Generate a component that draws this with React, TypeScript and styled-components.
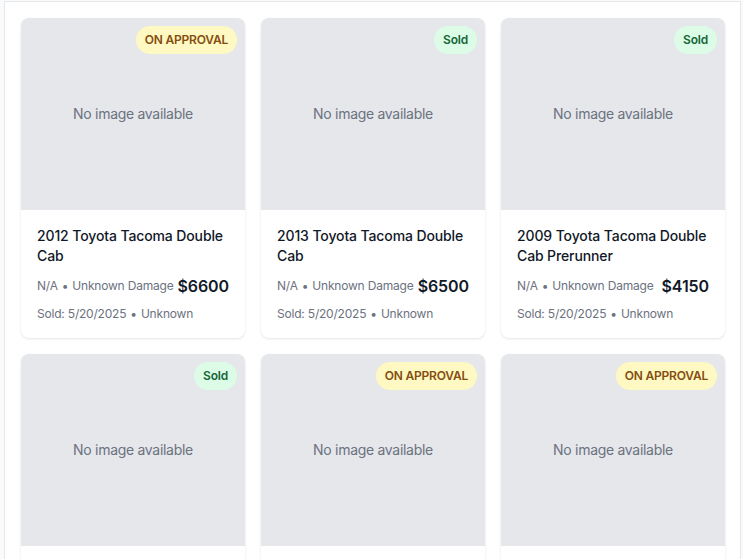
import React from "react";
import styled, { createGlobalStyle } from "styled-components";

const GlobalStyle = createGlobalStyle`
  html, body { margin: 0; padding: 0; background: #f9fafb; }
  body { font-family: Inter, "Noto Sans", "Liberation Sans", sans-serif; -webkit-font-smoothing: antialiased; }
  * { box-sizing: border-box; }
`;

const Page = styled.div`
  padding: 1px 2px 0 4px;
`;

const Panel = styled.div`
  background: #ffffff;
  border: 1px solid #e5e7eb;
  padding: 16px 14px 16px 16px;
`;

const Grid = styled.div`
  display: grid;
  grid-template-columns: repeat(3, 224px);
  gap: 16px;
`;

const Card = styled.div`
  background: #ffffff;
  border-radius: 8px;
  overflow: hidden;
  box-shadow: 0 1px 3px rgba(0, 0, 0, 0.08), 0 1px 2px rgba(0, 0, 0, 0.04);
  display: flex;
  flex-direction: column;
`;

const ImageArea = styled.div`
  position: relative;
  height: 192px;
  background: #e5e7eb;
  display: flex;
  align-items: center;
  justify-content: center;
  color: #6b7280;
  font-size: 14px;
  line-height: 20px;
  letter-spacing: -0.3px;
`;

const Badge = styled.span<{ $tone: "approval" | "sold" }>`
  position: absolute;
  top: 8px;
  right: 8px;
  padding: 6px 9px;
  border-radius: 9999px;
  font-size: 12px;
  line-height: 16px;
  font-weight: 600;
  letter-spacing: -0.2px;
  background: ${(p) => (p.$tone === "approval" ? "#fef9c3" : "#dcfce7")};
  color: ${(p) => (p.$tone === "approval" ? "#854d0e" : "#166534")};
`;

const Body = styled.div`
  padding: 16px;
  display: flex;
  flex-direction: column;
`;

const Title = styled.h3`
  margin: 0;
  font-size: 14px;
  line-height: 20px;
  font-weight: 500;
  letter-spacing: -0.12px;
  color: #111827;
`;

const MetaRow = styled.div`
  margin-top: 8px;
  display: flex;
  align-items: center;
  justify-content: space-between;
  gap: 4px;
`;

const Meta = styled.span`
  font-size: 12px;
  line-height: 16px;
  letter-spacing: -0.2px;
  white-space: nowrap;
  color: #6b7280;
`;

const Dot = styled.span`
  margin: 0 4px;
`;

const Price = styled.span`
  font-size: 16px;
  line-height: 24px;
  font-weight: 600;
  letter-spacing: -0.1px;
  white-space: nowrap;
  color: #111827;
`;

const SoldLine = styled(Meta)`
  margin-top: 8px;
  display: block;
`;

type Car = {
  title: string;
  price: string;
  status: "approval" | "sold";
};

const cars: Car[] = [
  { title: "2012 Toyota Tacoma Double Cab", price: "$6600", status: "approval" },
  { title: "2013 Toyota Tacoma Double Cab", price: "$6500", status: "sold" },
  { title: "2009 Toyota Tacoma Double Cab Prerunner", price: "$4150", status: "sold" },
  { title: "2011 Toyota Tacoma Double Cab", price: "$5900", status: "sold" },
  { title: "2010 Toyota Tacoma Access Cab", price: "$4800", status: "approval" },
  { title: "2014 Toyota Tacoma Double Cab", price: "$7200", status: "approval" },
];

export default function App() {
  return (
    <>
      <GlobalStyle />
      <Page>
        <Panel>
          <Grid>
            {cars.map((c, i) => (
              <Card key={i}>
                <ImageArea>
                  No image available
                  <Badge $tone={c.status}>{c.status === "approval" ? "ON APPROVAL" : "Sold"}</Badge>
                </ImageArea>
                <Body>
                  <Title>{c.title}</Title>
                  <MetaRow>
                    <Meta>
                      N/A<Dot>•</Dot>Unknown Damage
                    </Meta>
                    <Price>{c.price}</Price>
                  </MetaRow>
                  <SoldLine>
                    Sold: 5/20/2025<Dot>•</Dot>Unknown
                  </SoldLine>
                </Body>
              </Card>
            ))}
          </Grid>
        </Panel>
      </Page>
    </>
  );
}
